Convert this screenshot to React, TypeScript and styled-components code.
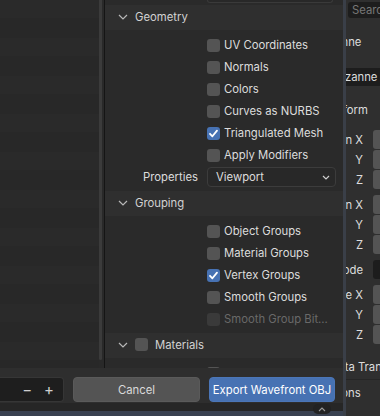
import React from 'react';
import styled, { createGlobalStyle } from 'styled-components';

const GlobalStyle = createGlobalStyle`
  html, body {
    margin: 0;
    padding: 0;
    background: #2f2f2f;
  }
  body {
    font-family: Inter, "Noto Sans", "DejaVu Sans", sans-serif;
    font-size: 11.3px;
    color: #dcdcdc;
  }
  #root {
    width: 380px;
    height: 416px;
    overflow: hidden;
  }
`;

type Opt = { label: string; checked?: boolean; disabled?: boolean };

const geometry: Opt[] = [
  { label: 'UV Coordinates' },
  { label: 'Normals' },
  { label: 'Colors' },
  { label: 'Curves as NURBS' },
  { label: 'Triangulated Mesh', checked: true },
  { label: 'Apply Modifiers' },
];

const grouping: Opt[] = [
  { label: 'Object Groups' },
  { label: 'Material Groups' },
  { label: 'Vertex Groups', checked: true },
  { label: 'Smooth Groups' },
  { label: 'Smooth Group Bit...', disabled: true },
];

function Chevron() {
  return (
    <svg width="10" height="6" viewBox="0 0 10 6">
      <path d="M1 1 L5 5 L9 1" fill="none" stroke="#b8b8b8" strokeWidth="1.2" />
    </svg>
  );
}

function CheckBox({ checked, disabled }: { checked?: boolean; disabled?: boolean }) {
  return (
    <Box checked={!!checked} disabled={!!disabled}>
      {checked && (
        <svg width="13" height="13" viewBox="0 0 13 13">
          <path d="M3 6.8 L5.4 9.3 L10 3.6" fill="none" stroke="#fff" strokeWidth="1.8" strokeLinecap="round" strokeLinejoin="round" />
        </svg>
      )}
    </Box>
  );
}

function Section({ title, items }: { title: string; items: Opt[] }) {
  return (
    <>
      <Header>
        <Chevron />
        <HeaderText>{title}</HeaderText>
      </Header>
      <SectionBody>
        {items.map((o) => (
          <OptRow key={o.label}>
            <CheckBox checked={o.checked} disabled={o.disabled} />
            <OptLabel disabled={!!o.disabled}>{o.label}</OptLabel>
          </OptRow>
        ))}
        {title === 'Geometry' && (
          <OptRow>
            <PropLabel>Properties</PropLabel>
            <Select>
              <span>Viewport</span>
              <svg width="8" height="5" viewBox="0 0 8 5">
                <path d="M1 1 L4 4 L7 1" fill="none" stroke="#cfcfcf" strokeWidth="1.2" />
              </svg>
            </Select>
          </OptRow>
        )}
      </SectionBody>
    </>
  );
}

function Axis({ label, dark }: { label: string; dark?: boolean }) {
  return (
    <XyzRow>
      <AxisLabel>{label}</AxisLabel>
      <ValueField dark={dark} />
    </XyzRow>
  );
}

export default function App() {
  return (
    <>
      <GlobalStyle />
      <Screen>
        <DialogColumn>
          <DialogBody>
            <FileList />
            <ScrollCol>
              <Thumb />
            </ScrollCol>
            <Divider />
            <Sidebar>
              <TopField />
              <Section title="Geometry" items={geometry} />
              <Section title="Grouping" items={grouping} />
              <Header>
                <Chevron />
                <SmallBox />
                <HeaderText>Materials</HeaderText>
              </Header>
              <SectionBody>
                <OptRow>
                  <CheckBox />
                </OptRow>
              </SectionBody>
            </Sidebar>
          </DialogBody>
          <Footer>
            <NumField>
              <span>−</span>
              <span>+</span>
            </NumField>
            <Button>Cancel</Button>
            <Button primary>Export Wavefront OBJ</Button>
          </Footer>
          <BottomStrip>
            <Grip>
              <svg width="8" height="5" viewBox="0 0 8 5">
                <path d="M1 4 L4 1 L7 4" fill="none" stroke="#9a9a9a" strokeWidth="1.1" />
              </svg>
            </Grip>
          </BottomStrip>
        </DialogColumn>

        <Props>
          <SearchRow>
            <SearchField>Search</SearchField>
          </SearchRow>
          <PanelHead h={40} indent={-31}>
            Suzanne
          </PanelHead>
          <NameRow>
            <DarkField>Suzanne</DarkField>
          </NameRow>
          <PanelHead h={40} indent={-33}>
            Transform
          </PanelHead>
          <Group first>
            <Axis label="Location X" />
            <Axis label="Y" />
            <Axis label="Z" />
          </Group>
          <Group>
            <Axis label="Rotation X" />
            <Axis label="Y" />
            <Axis label="Z" />
          </Group>
          <Group>
            <Axis label="Mode" dark />
          </Group>
          <Group>
            <Axis label="Scale X" />
            <Axis label="Y" />
            <Axis label="Z" />
          </Group>
          <PanelHead h={36} indent={-19} line>
            Delta Transform
          </PanelHead>
          <PanelHead h={25} indent={-34}>
            Relations
          </PanelHead>
        </Props>
      </Screen>
    </>
  );
}

const Screen = styled.div`
  display: flex;
  width: 380px;
  height: 416px;
  overflow: hidden;
  background: #2f2f2f;
`;

const DialogColumn = styled.div`
  width: 343px;
  flex: none;
  display: flex;
  flex-direction: column;
  border-right: 3px solid #3a3f48;
  background: #2b2b2b;
`;

const DialogBody = styled.div`
  height: 368px;
  display: flex;
  flex: none;
`;

const FileList = styled.div`
  width: 99px;
  flex: none;
  background: repeating-linear-gradient(
    to bottom,
    #2a2a2a 0px,
    #2a2a2a 18px,
    #282828 18px,
    #282828 38px,
    #2a2a2a 38px
  );
`;

const ScrollCol = styled.div`
  width: 5px;
  flex: none;
  background: #292929;
`;

const Thumb = styled.div`
  width: 3px;
  height: 360px;
  background: #3b3b3b;
  border-radius: 0 0 2px 2px;
`;

const Divider = styled.div`
  width: 1px;
  flex: none;
  background: #151515;
`;

const Sidebar = styled.div`
  flex: 1;
  display: flex;
  flex-direction: column;
  background: #2a2a2a;
  overflow: hidden;
`;

const TopField = styled.div`
  height: 2px;
  margin: 0 10px 2px 102px;
  border: 1px solid #3a3a3a;
  border-top: none;
  border-radius: 0 0 4px 4px;
  background: #282828;
  flex: none;
`;

const Header = styled.div`
  height: 25px;
  flex: none;
  display: flex;
  align-items: center;
  padding-left: 13px;
  padding-bottom: 2px;
  box-sizing: border-box;
  gap: 7px;
  background: #2f2f2f;
`;

const HeaderText = styled.span`
  color: #d2d2d2;
`;

const SmallBox = styled.div`
  width: 13px;
  height: 13px;
  border-radius: 3px;
  background: #545454;
`;

const SectionBody = styled.div`
  padding: 4px 0 3px;
  display: flex;
  flex-direction: column;
`;

const OptRow = styled.div`
  height: 22px;
  flex: none;
  display: flex;
  align-items: center;
  padding-left: 102px;
  gap: 4px;
`;

const Box = styled.div<{ checked: boolean; disabled: boolean }>`
  width: 13px;
  height: 13px;
  flex: none;
  border-radius: 3px;
  background: ${(p) => (p.checked ? '#4772b3' : p.disabled ? '#3a3a3a' : '#545454')};
  display: flex;
`;

const OptLabel = styled.span<{ disabled: boolean }>`
  color: ${(p) => (p.disabled ? '#696969' : '#dcdcdc')};
  white-space: nowrap;
`;

const PropLabel = styled.span`
  margin-left: -102px;
  width: 93px;
  text-align: right;
  padding-right: 6px;
  color: #dcdcdc;
`;

const Select = styled.div`
  width: 129px;
  height: 20px;
  box-sizing: border-box;
  border: 1px solid #3c3c3c;
  border-radius: 4px;
  background: #282828;
  display: flex;
  align-items: center;
  justify-content: space-between;
  padding: 0 5px 0 8px;
  margin-left: -1px;
`;

const Footer = styled.div`
  height: 35px;
  flex: none;
  display: flex;
  align-items: flex-start;
  padding-top: 9px;
  box-sizing: border-box;
  background: #2e2e2e;
`;

const NumField = styled.div`
  width: 64px;
  height: 25px;
  flex: none;
  box-sizing: border-box;
  background: #1e1e1e;
  border: 1px solid #363636;
  border-left: none;
  border-radius: 0 4px 4px 0;
  display: flex;
  align-items: center;
  justify-content: flex-end;
  gap: 12px;
  padding-right: 9px;
  font-size: 15px;
  color: #cfcfcf;
  margin-right: 9px;
`;

const Button = styled.div<{ primary?: boolean }>`
  width: 127px;
  height: 25px;
  flex: none;
  box-sizing: border-box;
  border-radius: 4px;
  display: flex;
  align-items: center;
  justify-content: center;
  white-space: nowrap;
  background: ${(p) => (p.primary ? '#4772b3' : '#545454')};
  border: 1px solid ${(p) => (p.primary ? '#4b76b8' : '#5a5a5a')};
  color: ${(p) => (p.primary ? '#ffffff' : '#dadada')};
  margin-right: 9px;
  & + & {
    width: 126px;
  }
`;

const BottomStrip = styled.div`
  flex: 1;
  display: flex;
  justify-content: flex-end;
  padding-right: 12px;
  background: linear-gradient(to bottom, #262626 0px, #262626 8px, #394150 8px);
`;

const Grip = styled.div`
  width: 18px;
  height: 10px;
  margin-top: 1px;
  border-radius: 5px;
  background: #222;
  display: flex;
  align-items: center;
  justify-content: center;
`;

const Props = styled.div`
  flex: 1;
  min-width: 0;
  overflow: hidden;
  display: flex;
  flex-direction: column;
  background: #2f2f2f;
  color: #dcdcdc;
  white-space: nowrap;
`;

const SearchRow = styled.div`
  height: 22px;
  flex: none;
  padding: 2px 0 0 2px;
  box-sizing: border-box;
`;

const SearchField = styled.div`
  height: 16px;
  width: 60px;
  background: #1d1d1d;
  border-radius: 3px 0 0 3px;
  color: #777;
  padding-left: 4px;
  line-height: 16px;
`;

const PanelHead = styled.div<{ h: number; indent: number; line?: boolean }>`
  height: ${(p) => p.h}px;
  flex: none;
  display: flex;
  align-items: center;
  box-sizing: border-box;
  margin-left: ${(p) => p.indent}px;
  padding-top: ${(p) => (p.line ? '10px' : '0')};
  border-bottom: ${(p) => (p.line ? '1px solid #262626' : 'none')};
`;

const NameRow = styled.div`
  height: 28px;
  flex: none;
  padding-top: 6px;
  box-sizing: border-box;
`;

const DarkField = styled.div`
  height: 18px;
  background: #1d1d1d;
  display: flex;
  align-items: center;
  margin-left: -15px;
`;

const Group = styled.div<{ first?: boolean }>`
  display: flex;
  flex-direction: column;
  gap: 1px;
  padding-top: ${(p) => (p.first ? '0' : '6px')};
`;

const XyzRow = styled.div`
  height: 19px;
  flex: none;
  display: flex;
  align-items: center;
  gap: 10px;
`;

const AxisLabel = styled.div`
  width: 17px;
  flex: none;
  display: flex;
  justify-content: flex-end;
`;

const ValueField = styled.div<{ dark?: boolean }>`
  width: 40px;
  height: 19px;
  flex: none;
  border-radius: 3px 0 0 3px;
  background: ${(p) => (p.dark ? '#1d1d1d' : '#545454')};
`;
